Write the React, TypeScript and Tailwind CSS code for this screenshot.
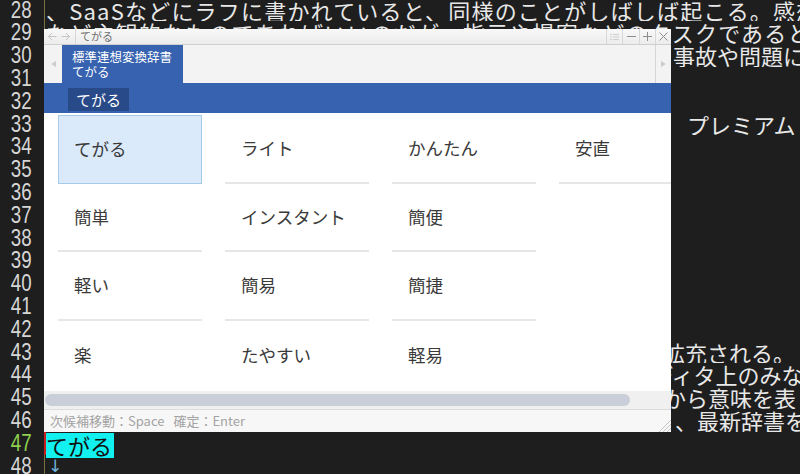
import React from 'react';

type Line = { n: number; pad: string; text: string };

const lines: Line[] = [
  { n: 28, pad: '', text: '、SaaSなどにラフに書かれていると、同様のことがしばしば起こる。感想' },
  { n: 29, pad: '', text: 'など主観的なものであればいいのだが、指示や提案などのタスクであると' },
  { n: 30, pad: 'pl-[627px]', text: '事故や問題に' },
  { n: 31, pad: '', text: '' },
  { n: 32, pad: '', text: '' },
  { n: 33, pad: 'pl-[641px]', text: 'プレミアム' },
  { n: 34, pad: '', text: '' },
  { n: 35, pad: '', text: '' },
  { n: 36, pad: '', text: '' },
  { n: 37, pad: '', text: '' },
  { n: 38, pad: '', text: '' },
  { n: 39, pad: '', text: '' },
  { n: 40, pad: '', text: '' },
  { n: 41, pad: '', text: '' },
  { n: 42, pad: '', text: '' },
  { n: 43, pad: 'pl-[617px]', text: '拡充される。' },
  { n: 44, pad: 'pl-[605px]', text: 'ディタ上のみな' },
  { n: 45, pad: 'pl-[618px]', text: 'から意味を表' },
  { n: 46, pad: 'pl-[629px]', text: '、最新辞書を' },
];

// candidates, row by row; empty string = empty slot
const candidates = [
  ['てがる', 'ライト', 'かんたん', '安直'],
  ['簡単', 'インスタント', '簡便', ''],
  ['軽い', '簡易', '簡捷', ''],
  ['楽', 'たやすい', '軽易', ''],
];

function Gutter({ n, active }: { n: number; active?: boolean }) {
  return (
    <div className="w-[44px] shrink-0 pr-[12px] text-right">
      <span
        className={`inline-block origin-right scale-x-[0.78] font-['Liberation_Sans',sans-serif] text-[24px] ${
          active ? 'text-[#8fd14f]' : 'text-[#d6d6d6]'
        }`}
      >
        {n}
      </span>
    </div>
  );
}

function EditorLine({ line }: { line: Line }) {
  return (
    <div className="flex h-[22.8px] leading-[22.8px]">
      <Gutter n={line.n} />
      <div className="flex-1 overflow-hidden whitespace-nowrap border-l border-[#77723f] pl-px text-[22px] text-[#e8e8e8]">
        <span className={line.pad ? line.pad : 'tracking-[1.2px]'}>{line.text}</span>
      </div>
    </div>
  );
}

function TitleBar() {
  return (
    <div className="flex h-[16px] items-stretch border-b border-[#cfcfcf] bg-gradient-to-b from-[#f8f8f8] to-[#ececec]">
      <div className="flex w-[31px] items-center gap-[4px] pl-[4px]">
        <svg width="9" height="9" viewBox="0 0 9 9" fill="none" stroke="#c4c4c4" strokeWidth="1">
          <path d="M8.5 4.5h-8M4 1L0.5 4.5 4 8" />
        </svg>
        <svg width="9" height="9" viewBox="0 0 9 9" fill="none" stroke="#c4c4c4" strokeWidth="1">
          <path d="M0.5 4.5h8M5 1l3.5 3.5L5 8" />
        </svg>
      </div>
      <div className="flex items-center border-l border-[#d6d6d6] pl-[4px] text-[11px] leading-none text-[#707070]">
        てがる
      </div>
      <div className="flex-1" />
      <div className="flex w-[16px] items-center justify-center border-l border-[#d8d8d8]">
        <svg width="9" height="8" viewBox="0 0 9 8" stroke="#cfcfcf" strokeWidth="1">
          <path d="M0 1.5h2M3 1.5h6M0 4h2M3 4h6M0 6.5h2M3 6.5h6" />
        </svg>
      </div>
      <div className="flex w-[17px] items-center justify-center border-l border-[#d8d8d8]">
        <svg width="9" height="9" viewBox="0 0 9 9" stroke="#8c8c8c" strokeWidth="1">
          <path d="M0 4.5h9" />
        </svg>
      </div>
      <div className="flex w-[16px] items-center justify-center border-l border-[#d8d8d8]">
        <svg width="9" height="9" viewBox="0 0 9 9" stroke="#8c8c8c" strokeWidth="1">
          <path d="M0 4.5h9M4.5 0v9" />
        </svg>
      </div>
      <div className="flex w-[16px] items-center justify-center border-l border-[#d8d8d8]">
        <svg width="9" height="9" viewBox="0 0 9 9" stroke="#8c8c8c" strokeWidth="1">
          <path d="M0.5 0.5l8 8M8.5 0.5l-8 8" />
        </svg>
      </div>
    </div>
  );
}

function TabRow() {
  return (
    <div className="flex h-[38px] bg-[#f3f3f3]">
      <div className="flex w-[18px] items-center justify-center">
        <svg width="5" height="6" viewBox="0 0 5 6" fill="#cccccc">
          <path d="M5 0L0 3l5 3z" />
        </svg>
      </div>
      <div className="w-[121px] bg-[#3762b0] pl-[10px] pt-[4px] text-[12.5px] leading-[15px] text-white">
        <div>標準連想変換辞書</div>
        <div>てがる</div>
      </div>
      <div className="flex-1" />
      <div className="flex w-[16px] items-center justify-center border-l border-[#d6d6d6]">
        <svg width="5" height="6" viewBox="0 0 5 6" fill="#cccccc">
          <path d="M0 0l5 3-5 3z" />
        </svg>
      </div>
    </div>
  );
}

function Cell({ text, selected, lastRow }: { text: string; selected: boolean; lastRow: boolean }) {
  if (!text) return <div className="h-[68.5px]" />;
  if (selected) {
    return (
      <div className="flex h-[68.5px] items-center border border-[#a6cbe9] bg-[#dbeafb] pl-[15px] text-[17.5px] text-[#3a3a3a]">
        {text}
      </div>
    );
  }
  return (
    <div
      className={`flex h-[68.5px] items-center pl-[16px] text-[17.5px] text-[#3a3a3a] ${
        lastRow ? '' : 'border-b-2 border-[#e6e6e6]'
      }`}
    >
      {text}
    </div>
  );
}

function CandidatePopup() {
  return (
    <div className="absolute left-[44px] top-[29px] flex h-[403px] w-[627px] flex-col bg-white font-['Noto_Sans_CJK_JP',sans-serif]">
      <TitleBar />
      <TabRow />
      <div className="h-[30px] bg-[#3762b0] pl-[24px] pt-[4px]">
        <span className="inline-block h-[23px] bg-[#294a88] px-[8px] text-[15px] leading-[23px] text-white">てがる</span>
      </div>
      <div className="flex-1 overflow-hidden pl-[14px] pt-[2px]">
        <div className="grid grid-cols-[repeat(4,144px)] gap-x-[23px]">
          {candidates.map((row, r) =>
            row.map((text, c) => (
              <Cell key={`${r}-${c}`} text={text} selected={r === 0 && c === 0} lastRow={r === candidates.length - 1} />
            ))
          )}
        </div>
      </div>
      <div className="h-[18px] bg-[#f0f0f0] pl-[1px] pt-[3px]">
        <div className="h-[12px] w-[585px] rounded-full bg-[#c9ced8]" />
      </div>
      <div className="relative flex h-[23px] items-center border-t border-[#dcdcdc] bg-[#f7f7f7] pl-[6px] text-[13px] text-[#a3a3a3]">
        <span>次候補移動：Space</span>
        <span className="ml-[9px]">確定：Enter</span>
        <svg className="absolute bottom-0 right-0" width="15" height="15" viewBox="0 0 15 15" stroke="#c4c4c4" strokeWidth="1">
          <path d="M3 15L15 3M7 15L15 7M11 15L15 11" />
        </svg>
      </div>
    </div>
  );
}

export default function App() {
  return (
    <div className="relative h-[474px] w-[800px] overflow-hidden bg-[#1e1e1e] font-['Noto_Sans_CJK_JP',sans-serif]">
      <div className="-mt-[1.4px] flex flex-col">
        {lines.map((line) => (
          <EditorLine key={line.n} line={line} />
        ))}
        {/* current input line */}
        <div className="flex h-[22.8px] leading-[22.8px]">
          <Gutter n={47} active />
          <div className="flex flex-1 border-l-2 border-[#c81e1e] pt-px">
            <span className="h-[25px] bg-[#12f0f0] pr-[2px] text-[22px] leading-[25px] text-[#111]">てがる</span>
          </div>
        </div>
        <div className="flex h-[22.8px] leading-[22.8px]">
          <Gutter n={48} />
          <div className="flex-1 border-l border-[#77723f] pl-[3px] pt-[3px] font-['DejaVu_Sans',sans-serif] text-[17px] leading-none text-[#6fb4dc]">
            ↓
          </div>
        </div>
      </div>
      <CandidatePopup />
    </div>
  );
}
